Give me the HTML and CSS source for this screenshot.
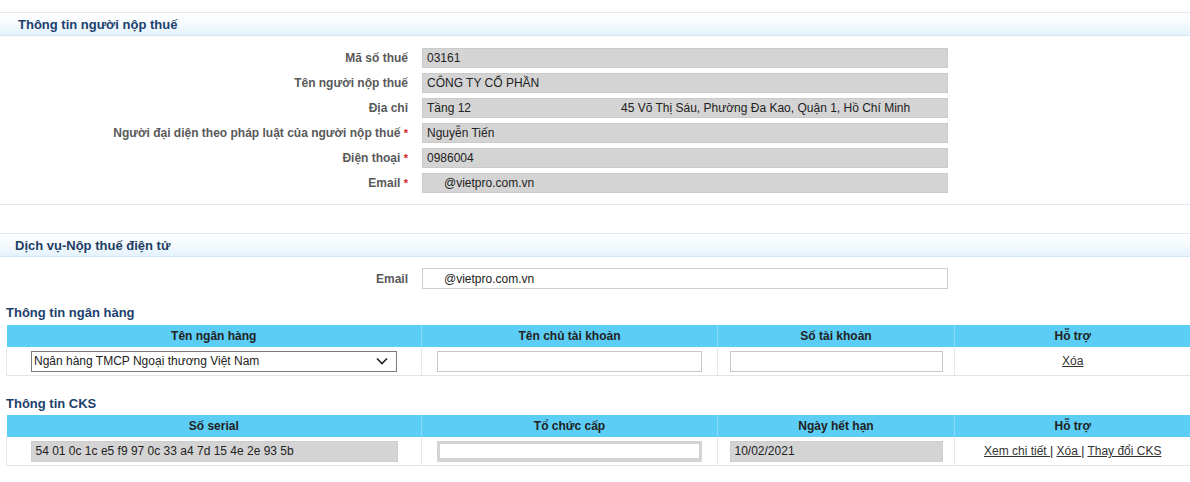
FILE: index.html
```html
<!DOCTYPE html>
<html lang="vi">
<head>
<meta charset="utf-8">
<title>Thông tin người nộp thuế</title>
<link rel="stylesheet" href="styles.css">
</head>
<body>
<div class="page">
  <section class="section section-taxpayer">
    <div class="section-head"><h2 class="section-title">Thông tin người nộp thuế</h2></div>
    <div class="form">
      <div class="row"><label class="lbl">Mã số thuế</label><div class="field field-ro">03161</div></div>
      <div class="row"><label class="lbl">Tên người nộp thuế</label><div class="field field-ro">CÔNG TY CỔ PHẦN</div></div>
      <div class="row"><label class="lbl">Địa chỉ</label><div class="field field-ro"><span class="addr-a">Tầng 12</span><span>45 Võ Thị Sáu, Phường Đa Kao, Quận 1, Hồ Chí Minh</span></div></div>
      <div class="row"><label class="lbl">Người đại diện theo pháp luật của người nộp thuế <span class="req">*</span></label><div class="field field-ro">Nguyễn Tiến</div></div>
      <div class="row"><label class="lbl">Điện thoại <span class="req">*</span></label><div class="field field-ro">0986004</div></div>
      <div class="row"><label class="lbl">Email <span class="req">*</span></label><div class="field field-ro field-mail">@vietpro.com.vn</div></div>
    </div>
  </section>

  <section class="section section-service">
    <div class="section-head"><h2 class="section-title title-thin">Dịch vụ-Nộp thuế điện tử</h2></div>
    <div class="form form-service">
      <div class="row row-mail"><label class="lbl">Email</label><div class="field field-edit field-mail">@vietpro.com.vn</div></div>
    </div>

    <h3 class="sub-title sub-bank">Thông tin ngân hàng</h3>
    <table class="grid">
      <colgroup><col class="c1"><col class="c2"><col class="c3"><col class="c4"></colgroup>
      <thead><tr><th>Tên ngân hàng</th><th>Tên chủ tài khoản</th><th>Số tài khoản</th><th>Hỗ trợ</th></tr></thead>
      <tbody><tr>
        <td><div class="select"><span>Ngân hàng TMCP Ngoại thương Việt Nam</span><svg class="chev" width="12" height="8" viewBox="0 0 12 8"><path d="M1 1.5 L6 6.5 L11 1.5" fill="none" stroke="#222" stroke-width="1.6"/></svg></div></td>
        <td><div class="box box-w2"></div></td>
        <td><div class="box box-w3"></div></td>
        <td><a class="lnk" href="#">Xóa</a></td>
      </tr></tbody>
    </table>

    <h3 class="sub-title sub-cks">Thông tin CKS</h3>
    <table class="grid">
      <colgroup><col class="c1"><col class="c2"><col class="c3"><col class="c4"></colgroup>
      <thead><tr><th>Số serial</th><th>Tổ chức cấp</th><th>Ngày hết hạn</th><th>Hỗ trợ</th></tr></thead>
      <tbody><tr>
        <td><div class="box box-ro box-w1">54 01 0c 1c e5 f9 97 0c 33 a4 7d 15 4e 2e 93 5b</div></td>
        <td><div class="box box-org box-w2"></div></td>
        <td><div class="box box-ro box-w3">10/02/2021</div></td>
        <td><a class="lnk" href="#">Xem chi tiết </a>| <a class="lnk" href="#">Xóa </a>| <a class="lnk" href="#">Thay đổi CKS</a></td>
      </tr></tbody>
    </table>
  </section>
</div>
</body>
</html>
```

FILE: styles.css
```css
html, body {
  margin: 0;
  padding: 0;
  background: #ffffff;
}
body {
  font-family: "Liberation Sans", Arial, sans-serif;
  font-size: 12px;
  color: #222;
  width: 1190px;
  overflow: hidden;
}
.page {
  padding-top: 12px;
}
.section-head {
  height: 22px;
  border-top: 1px solid #e2e9ee;
  border-bottom: 1px solid #d2e5f3;
  background: linear-gradient(to bottom, #ffffff 0%, #f6fbfe 45%, #e4f2fc 100%);
  display: flex;
  align-items: center;
}
.section-title {
  margin: 0;
  padding-left: 18px;
  font-size: 13px;
  font-weight: bold;
  color: #1c3f6e;
}
.title-thin {
  padding-left: 15px;
  color: #1f3d63;
}
.section-taxpayer {
  border-bottom: 1px solid #dde9f1;
}
.form {
  padding: 12px 0 11px;
  display: flex;
  flex-direction: column;
  gap: 5px;
}
.row {
  display: flex;
  align-items: center;
  gap: 14px;
}
.lbl {
  width: 408px;
  text-align: right;
  font-weight: bold;
  color: #595959;
  white-space: nowrap;
}
.req {
  color: #d22;
  font-size: 11px;
}
.field {
  width: 526px;
  height: 20px;
  box-sizing: border-box;
  padding-left: 4px;
  display: flex;
  align-items: center;
  white-space: nowrap;
}
.field-ro {
  background: #d4d4d4;
  border: 1px solid #cacaca;
}
.field-edit {
  height: 21px;
  background: #fff;
  border: 1px solid #cfcfcf;
}
.field-mail {
  padding-left: 21px;
}
.addr-a {
  display: inline-block;
  width: 194px;
}
.section-service {
  margin-top: 28px;
}
.form-service {
  padding: 11px 0 0;
}
.sub-title {
  margin: 0;
  padding-left: 6px;
  font-size: 13px;
  font-weight: bold;
  color: #1c3f6e;
  line-height: 16px;
}
.sub-bank {
  padding-top: 16px;
  padding-bottom: 4px;
}
.sub-cks {
  padding-top: 20px;
  padding-bottom: 3px;
}
.grid {
  margin-left: 6px;
  width: 1184px;
  border-collapse: collapse;
  table-layout: fixed;
}
.c1 { width: 415px; }
.c2 { width: 296px; }
.c3 { width: 237px; }
.c4 { width: 236px; }
.grid th {
  height: 22px;
  padding: 0;
  background: #5ccdf5;
  color: #222;
  font-weight: bold;
  font-size: 12px;
  border-left: 1px solid #8ddaf6;
  text-align: center;
}
.grid th:first-child {
  border-left: none;
}
.grid td {
  height: 28px;
  padding: 0;
  text-align: center;
  vertical-align: middle;
  border-left: 1px solid #e8e8e8;
  border-bottom: 1px solid #e4e4e4;
}
.select {
  width: 366px;
  height: 21px;
  margin: 0 auto;
  box-sizing: border-box;
  border: 1px solid #7a7a7a;
  background: #fff;
  display: flex;
  align-items: center;
  justify-content: space-between;
  padding: 0 8px 0 2px;
  text-align: left;
  font-size: 12px;
}
.box {
  height: 21px;
  margin: 0 auto;
  box-sizing: border-box;
  border: 1px solid #c8c8c8;
  background: #fff;
  text-align: left;
  padding-left: 4px;
  line-height: 19px;
  white-space: nowrap;
}
.box-w1 { width: 367px; }
.box-w2 { width: 265px; }
.box-w3 { width: 213px; }
.box-ro {
  background: #d4d4d4;
  border-color: #cdcdcd;
}
.box-org {
  border: 3px solid #d4d4d4;
  border-bottom-width: 4px;
}
.lnk {
  color: #333;
  text-decoration: underline;
}
```
